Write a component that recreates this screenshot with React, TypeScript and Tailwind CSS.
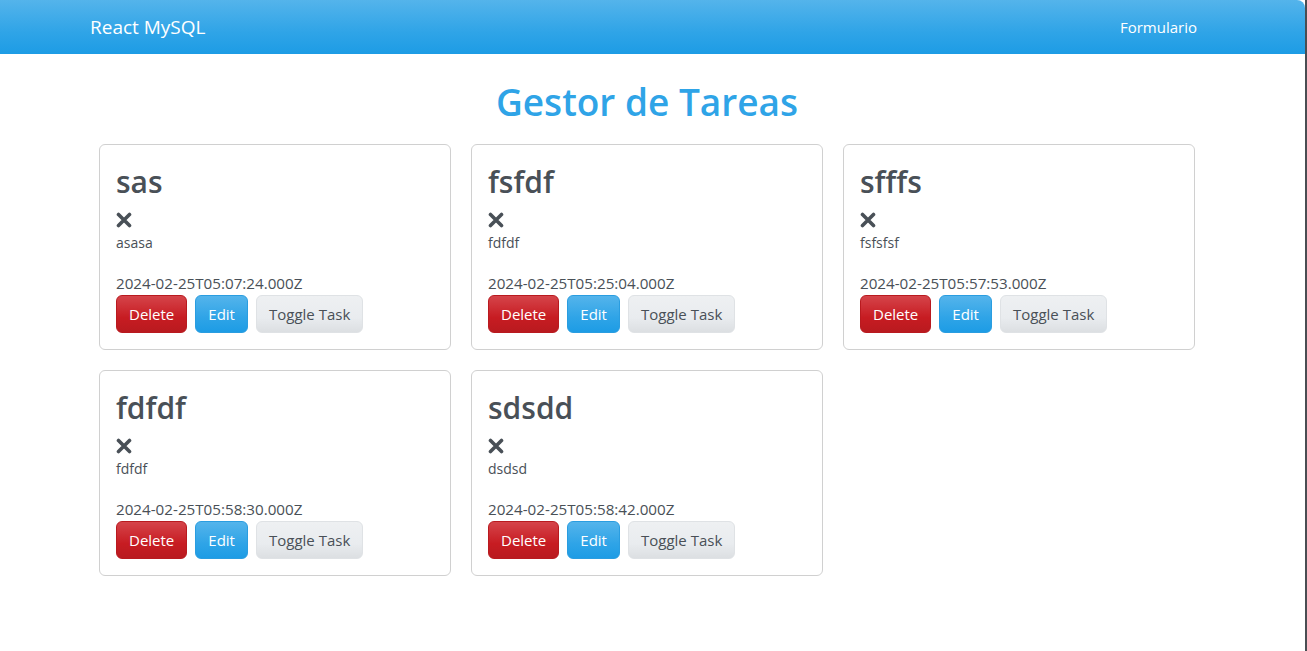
import React from "react";

type Task = { title: string; desc: string; date: string };

const tasks: Task[] = [
  { title: "sas", desc: "asasa", date: "2024-02-25T05:07:24.000Z" },
  { title: "fsfdf", desc: "fdfdf", date: "2024-02-25T05:25:04.000Z" },
  { title: "sfffs", desc: "fsfsfsf", date: "2024-02-25T05:57:53.000Z" },
  { title: "fdfdf", desc: "fdfdf", date: "2024-02-25T05:58:30.000Z" },
  { title: "sdsdd", desc: "dsdsd", date: "2024-02-25T05:58:42.000Z" },
];

function XIcon() {
  return (
    <svg width="16" height="16" viewBox="0 0 16 16" className="block">
      <path d="M2.5 2.5 L13.5 13.5 M13.5 2.5 L2.5 13.5" stroke="#495057" strokeWidth="3.6" strokeLinecap="round" fill="none" />
    </svg>
  );
}

function Card({ t }: { t: Task }) {
  return (
    <div className="border border-[#d0d0d0] rounded-[6px] px-4 pt-4 pb-4 h-[206px] flex flex-col">
      <h2 className="text-[30px] leading-[38px] font-semibold text-[#495057] mt-[2px] mb-[6px]">{t.title}</h2>
      <div className="h-6 pt-[5px]">
        <XIcon />
      </div>
      <p className="text-[14px] leading-6 text-[#495057] mb-4">{t.desc}</p>
      <div className="text-[15.2px] leading-6 text-[#495057]">{t.date}</div>
      <div className="flex gap-2">
        <button className="h-[38px] px-3 rounded-[6px] text-[15px] text-white bg-[linear-gradient(#d5444a,#c71c22_60%,#b91a1f)] border border-[#b91a1f]">
          Delete
        </button>
        <button className="h-[38px] px-3 rounded-[6px] text-[15px] text-white bg-[linear-gradient(#54b4eb,#2fa4e7_60%,#1d9ce5)] border border-[#2a9de0]">
          Edit
        </button>
        <button className="h-[38px] px-3 rounded-[6px] text-[15px] text-[#495057] bg-[linear-gradient(#eef0f2,#e9ecef_60%,#dcdfe2)] border border-[#dfe2e5]">
          Toggle Task
        </button>
      </div>
    </div>
  );
}

export default function App() {
  return (
    <div className="flex w-[1307px] h-[651px] bg-white" style={{ fontFamily: '"Open Sans", "Noto Sans", sans-serif' }}>
      <div className="flex-1 flex flex-col">
        <nav className="h-[54px] rounded-tr-[8px] bg-[linear-gradient(#54b4eb,#2fa4e7_60%,#1d9ce5)] flex items-center justify-between pl-[90px] pr-[108px]">
          <span className="text-white text-[19px]">React MySQL</span>
          <span className="text-white text-[15px]">Formulario</span>
        </nav>
        <main className="ml-[99px] w-[1096px]">
          <h1 className="text-center text-[#2fa4e7] text-[37px] font-semibold leading-[48px] pt-[24px] pb-[18px]">
            Gestor de Tareas
          </h1>
          <div className="grid grid-cols-3 gap-5">
            {tasks.map((t, i) => (
              <Card key={i} t={t} />
            ))}
          </div>
        </main>
      </div>
      <div className="w-[2px] bg-[#4a4d52]" />
    </div>
  );
}
